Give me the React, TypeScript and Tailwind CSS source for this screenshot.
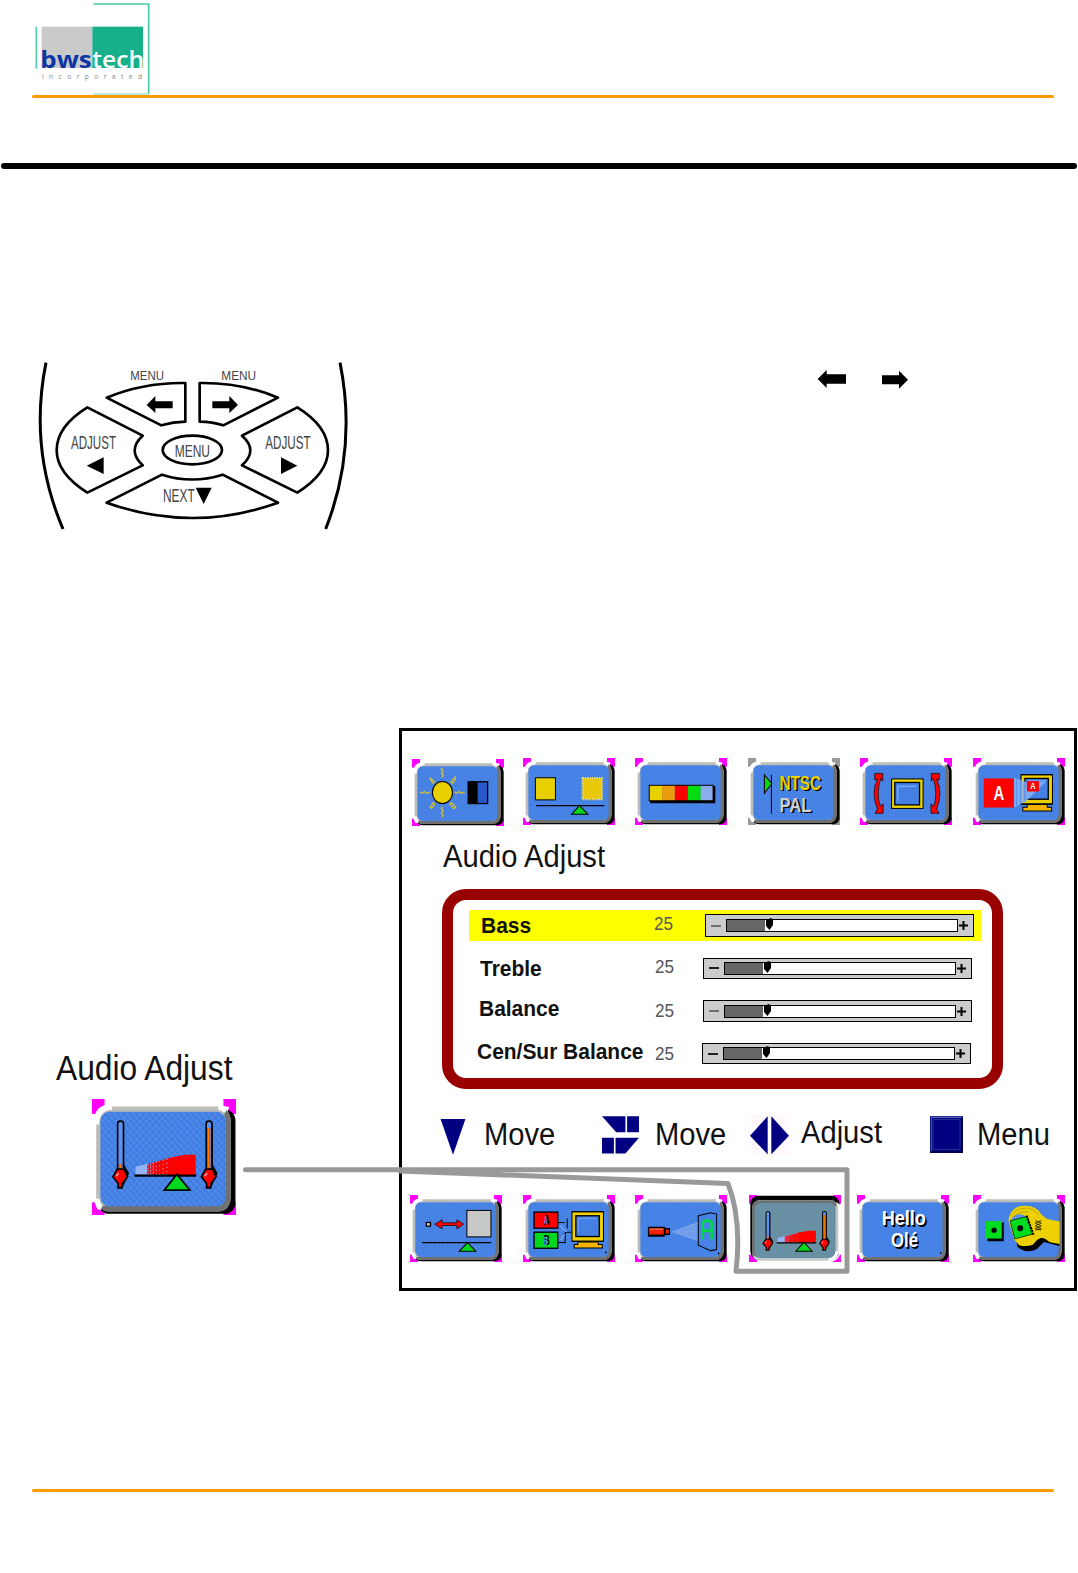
import type { ReactNode } from "react";

function Tile({ children, pressed = false, corner = "#ff00ff", className }: { children: ReactNode; pressed?: boolean; corner?: string; className: string }) {
  return (
    <svg viewBox="0 0 275 200" preserveAspectRatio="none" className={className}>
      <defs>
        <pattern id="weaveBlue" width="12" height="12" patternUnits="userSpaceOnUse">
          <rect width="12" height="12" fill="#4683e6" />
          <path d="M1 0l2 6M7 6l2 6" stroke="#3c74d4" strokeWidth="2" />
          <path d="M7 0l2 5M1 7l2 5" stroke="#5590f0" strokeWidth="2" />
        </pattern>
        <pattern id="weaveSteel" width="12" height="12" patternUnits="userSpaceOnUse">
          <rect width="12" height="12" fill="#6890a4" />
          <path d="M1 0l2 6M7 6l2 6" stroke="#5a7f98" strokeWidth="2" />
          <path d="M7 0l2 5M1 7l2 5" stroke="#7aa2ae" strokeWidth="2" />
        </pattern>
      </defs>
      <path d="M0 0H24V26H0ZM251 0H275V26H251ZM0 178H24V200H0ZM251 178H275V200H251Z" fill={corner} />
      {pressed ? (
        <>
          <rect x="12" y="10" width="260" height="188" rx="26" fill="#fff" />
          <rect x="4" y="2" width="266" height="190" rx="24" fill="#000" />
          <path d="M262 20L275 34V170L246 198H30L12 186L40 194H240Z" fill="#fff" />
          <rect x="9" y="15" width="258" height="181" rx="24" fill="#c4c8ca" />
          <path d="M9 178V40Q9 16 34 16H244Q262 18 262 34H24V186Z" fill="#6c7070" />
          <rect x="17" y="24" width="242" height="164" rx="17" fill="url(#weaveSteel)" />
          <path d="M262 168Q262 190 238 193" fill="none" stroke="#fff" strokeWidth="8" />
        </>
      ) : (
        <>
          <rect x="12" y="18" width="262" height="180" rx="20" fill="#000" />
          <path d="M4 40Q4 10 34 10H240L262 14L256 30H30L20 190H10L4 176Z" fill="#fff" />
          <rect x="8" y="13" width="257" height="181" rx="25" fill="#bdbdb8" />
          <path d="M245 14Q265 18 265 40V168Q265 194 240 194H32Q18 194 13 184H244Q252 182 253 170V24Z" fill="#707070" />
          <rect x="16" y="22" width="240" height="163" rx="17" fill="url(#weaveBlue)" />
          <path d="M9 44Q9 15 38 14M242 13L256 20M9 172Q11 184 18 188" fill="none" stroke="#fff" strokeWidth="9" />
        </>
      )}
      {children}
    </svg>
  );
}

function Thermometer({ x, level }: { x: number; level: number }) {
  return (
    <g>
      <path d={`M${x + 5} 42V114l9 14l-12 24h-8`} fill="none" stroke="#000" strokeWidth="5" />
      <rect x={x - 5} y="38" width="11" height="88" rx="5" fill="#5c94f4" stroke="#000" strokeWidth="3" />
      <rect x={x - 3} y={level} width="6" height={128 - level} fill="#f03c00" />
      <rect x={x - 1} y={level} width="2" height={122 - level} fill="#ff9000" />
      <path d={`M${x - 6} 121H${x + 7}L${x + 14} 134L${x + 4} 146V153H${x - 4}V146L${x - 14} 134Z`} fill="#f00" stroke="#000" strokeWidth="3" />
      <path d={`M${x - 8} 133l5 -5`} stroke="#ff9aa0" strokeWidth="3" />
    </g>
  );
}

function AudioGlyph({ left, right }: { left: number; right: number }) {
  return (
    <g>
      <Thermometer x={left} level={113} />
      <Thermometer x={right} level={50} />
      <path d="M83 117L108 111V130H83Z" fill="#94b4f2" />
      <path d="M105 113L150 101V130H105Z" fill="#f00" />
      <path d="M107 113V130M112 112V130M117 110V130" stroke="#94b4f2" strokeWidth="2" strokeDasharray="3 2" />
      <path d="M123 108V130M129 107V130M136 105V130M143 103V130" stroke="#a5a5e8" strokeWidth="2" strokeDasharray="2 5" />
      <path d="M145 102L176 96H198V131H145Z" fill="#f00" />
      <path d="M81 132H199" stroke="#000" strokeWidth="4" />
      <path d="M162 130L187 157H138Z" fill="#00d820" stroke="#000" strokeWidth="3" />
    </g>
  );
}

function Monitor() {
  return (
    <>
      <path d="M149 52H239V138H149Z" fill="#000" />
      <path d="M153 56H235V134H153Z" fill="#ffe000" />
      <path d="M157 60H231V130H157Z" fill="#d8a800" />
      <rect x="160" y="64" width="69" height="60" fill="#4480e4" stroke="#000" strokeWidth="3" />
      <path d="M167 120V71H224" fill="none" stroke="#86b4ff" strokeWidth="2" />
      <path d="M170 138H222V146H236V157H155V146H170Z" fill="#f4b400" stroke="#000" strokeWidth="3" />
    </>
  );
}

const tile = "h-[67px] w-[92px] shrink-0";
const tileText = { fontFamily: "Liberation Sans", fontWeight: 700, lengthAdjust: "spacingAndGlyphs" as const };

function Brightness() {
  return (
    <Tile className={tile}>
      <g stroke="#cdbb3e" strokeWidth="4" fill="none">
        <path d="M91 26l-4 5 6 5-5 6 5 6-4 8M91 142l-4 6 6 6-5 6 5 8-4 6M24 99l7 3 6-5 7 5 11-3M127 99l7 3 6-5 7 5 11-3" />
        <path d="M52 56l10 16 5-5-10-8zM129 54l-13 14 5 5 8-10zM54 144l9-14 5 5-9 12zM131 144l-14-14-4 5 12 13z" strokeWidth="4" />
      </g>
      <ellipse cx="91" cy="100" rx="30" ry="33" fill="#e8d000" stroke="#000" strokeWidth="3" />
      <rect x="168" y="68" width="58" height="65" fill="#2858c8" stroke="#000" strokeWidth="4" />
      <rect x="168" y="68" width="28" height="65" fill="#000" />
    </Tile>
  );
}

function Sharpness() {
  return (
    <Tile className={tile}>
      <rect x="37" y="59" width="60" height="66" fill="#e8d000" stroke="#000" strokeWidth="3" />
      <rect x="178" y="60" width="58" height="63" fill="#e8c808" />
      <rect x="178" y="60" width="58" height="63" fill="none" stroke="#eddc70" strokeWidth="6" strokeDasharray="4 3" />
      <path d="M39 142H243" stroke="#000" strokeWidth="4" />
      <path d="M169 142L194 168H145Z" fill="#00d820" stroke="#000" strokeWidth="3" />
    </Tile>
  );
}

function ColorBar() {
  return (
    <Tile className={tile}>
      <rect x="45" y="84" width="195" height="51" fill="#000" />
      <rect x="41" y="80" width="194" height="49" fill="#000" />
      <path d="M44 83H82V126H44Z" fill="#e8d000" />
      <path d="M81 83H120V126H81Z" fill="#e89c10" />
      <path d="M119 83H159V126H119Z" fill="#f00" />
      <path d="M158 83H197V126H158Z" fill="#00dc10" />
      <path d="M196 83H232V126H196Z" fill="#8cacf0" />
    </Tile>
  );
}

function VideoStandard() {
  return (
    <Tile className={tile} corner="#999999">
      <path d="M70 50V166" stroke="#000" strokeWidth="3" />
      <path d="M49 50L71 77L49 105Z" fill="#00dc10" stroke="#000" strokeWidth="3" />
      <text {...tileText} x="99" y="100" fontSize="61" textLength="124" fill="#000">NTSC</text>
      <text {...tileText} x="94" y="96" fontSize="61" textLength="124" fill="#e8d000">NTSC</text>
      <text {...tileText} x="99" y="165" fontSize="61" textLength="95" fill="#000">PAL</text>
      <text {...tileText} x="94" y="161" fontSize="61" textLength="95" fill="#d0d0d0">PAL</text>
    </Tile>
  );
}

function Rotate() {
  const arrow = "M44 46H68V69L62 61Q48 104 60 144L69 137V165H45L52 152Q32 104 52 63L44 66Z";
  return (
    <Tile className={tile}>
      <path d={arrow} fill="#f00" stroke="#000" strokeWidth="2" />
      <path d={arrow} fill="#f00" stroke="#000" strokeWidth="2" transform="matrix(-1 0 0 1 281 0)" />
      <rect x="93" y="61" width="97" height="91" fill="#000" />
      <rect x="96" y="64" width="91" height="85" fill="#ecd400" />
      <rect x="104" y="73" width="74" height="67" fill="#4480e4" stroke="#000" strokeWidth="4" />
      <path d="M113 130V84H168" fill="none" stroke="#8cb4ff" strokeWidth="3" />
    </Tile>
  );
}

function Source() {
  return (
    <Tile className={tile}>
      <rect x="142" y="48" width="97" height="92" fill="#000" />
      <rect x="145" y="52" width="91" height="83" fill="#ecd000" />
      <rect x="155" y="61" width="70" height="62" fill="#4480e4" stroke="#000" strokeWidth="4" />
      <path d="M165 67H220" stroke="#86b4ff" strokeWidth="2" />
      <path d="M162 139H222V147H235V158H149V147H162Z" fill="#f4b400" stroke="#000" strokeWidth="3" />
      <path d="M123 58L160 72L218 70L160 128L123 148Z" fill="#8cb4f8" opacity=".8" />
      <path d="M130 62V144M142 66V138M153 72V132" stroke="#5c92ee" strokeWidth="3" />
      <rect x="32" y="61" width="90" height="87" fill="#f00" />
      <text {...tileText} x="61" y="126" fontSize="61" textLength="32" fill="#fff">A</text>
      <rect x="161" y="69" width="36" height="31" fill="#f00" />
      <text {...tileText} x="171" y="94" fontSize="28" textLength="16" fill="#fff">A</text>
    </Tile>
  );
}

function SizeAdjust() {
  return (
    <Tile className={tile}>
      <rect x="49" y="82" width="12" height="11" fill="#ddd" stroke="#000" strokeWidth="4" />
      <path d="M74 87L96 74V83H140V74L161 87L140 101V91H96V101Z" fill="#f00" stroke="#000" strokeWidth="2" />
      <rect x="170" y="46" width="72" height="79" fill="#c8c8c8" stroke="#000" strokeWidth="3" />
      <path d="M36 142H243" stroke="#000" strokeWidth="4" />
      <path d="M172 142L197 168H147Z" fill="#00d820" stroke="#000" strokeWidth="3" />
    </Tile>
  );
}

function InputSelect() {
  return (
    <Tile className={tile}>
      <path d="M102 82H124M132 70V100M126 144V111H145M102 142H128" fill="none" stroke="#000" strokeWidth="3" />
      <path d="M112 92l18 18M113 134l12-16" stroke="#9abfff" strokeWidth="4" strokeDasharray="4 3" />
      <rect x="33" y="51" width="71" height="48" fill="#f00" stroke="#000" strokeWidth="4" />
      <rect x="33" y="111" width="71" height="48" fill="#00d820" stroke="#000" strokeWidth="4" />
      <text {...tileText} x="62" y="90" fontSize="42" textLength="18" fill="#000">A</text>
      <text {...tileText} x="63" y="88" fontSize="32" textLength="10" fill="#5d98f0">A</text>
      <text {...tileText} x="62" y="150" fontSize="42" textLength="18" fill="#000">B</text>
      <text {...tileText} x="63" y="148" fontSize="32" textLength="10" fill="#5d98f0">B</text>
      <rect x="145" y="48" width="97" height="92" fill="#000" />
      <rect x="148" y="52" width="91" height="84" fill="#ecd000" />
      <rect x="158" y="62" width="70" height="62" fill="#4480e4" stroke="#000" strokeWidth="4" />
      <path d="M165 112V70H220" fill="none" stroke="#86b4ff" strokeWidth="2" />
      <path d="M164 140H225V148H237V158H153V148H164Z" fill="#f4b400" stroke="#000" strokeWidth="3" />
      <path d="M248 169v5" stroke="#000" strokeWidth="4" />
    </Tile>
  );
}

function Projection() {
  return (
    <Tile className={tile}>
      <path d="M110 110L189 79V139Z" fill="#7aa2ee" opacity=".8" />
      <path d="M114 109L188 84M116 112L188 134M120 110H188" stroke="#c8c890" strokeWidth="2" strokeDasharray="3 9" />
      <path d="M41 97H87L91 101H102V117H90L86 122H41Z" fill="#000" stroke="#000" strokeWidth="5" />
      <path d="M42 99H86V118H42ZM92 103H101V115H92Z" fill="#f22000" />
      <path d="M44 102H84" stroke="#ff8a70" strokeWidth="3" />
      <path d="M189 62L226 53L244 57V163L226 166L189 150Z" fill="none" stroke="#000" strokeWidth="3" />
      <path d="M202 132V88Q202 77 214 77H219Q230 77 230 88V132M202 107H230" fill="none" stroke="#00dc40" strokeWidth="9" strokeDasharray="9 1" />
      <path d="M250 172v5" stroke="#000" strokeWidth="4" />
    </Tile>
  );
}

function Language() {
  return (
    <Tile className={tile}>
      <text {...tileText} x="79" y="95" fontSize="60" textLength="132" fill="#000">Hello</text>
      <text {...tileText} x="74" y="91" fontSize="60" textLength="132" fill="#fff">Hello</text>
      <text {...tileText} x="107" y="160" fontSize="60" textLength="80" fill="#000">Olé</text>
      <text {...tileText} x="102" y="156" fontSize="60" textLength="80" fill="#fff">Olé</text>
      <path d="M250 170v5" stroke="#000" strokeWidth="4" />
    </Tile>
  );
}

function Setup() {
  return (
    <Tile className={tile}>
      <path d="M43 82H92V138H43Z" fill="#000" />
      <path d="M38 78H86V130H38Z" fill="#00dc20" />
      <circle cx="63" cy="105" r="8" fill="#000" />
      <path d="M130 142L134 156Q160 176 190 162L212 140L258 152V142L188 124Z" fill="#000" />
      <path d="M106 76Q112 34 150 32Q190 30 204 58L222 72L259 79V146L230 141L212 128Q196 124 180 148Q160 156 138 150L124 134Z" fill="#ecd000" />
      <path d="M113 76Q122 54 146 58L160 64L113 77Z" fill="#5a92ea" />
      <path d="M113 62Q128 38 165 39Q188 45 194 60M120 67Q138 47 166 50" fill="none" stroke="#a99400" strokeWidth="2" />
      <path d="M111 77L162 64L178 117L125 131Z" fill="#00dc20" stroke="#000" strokeWidth="2" />
      <path d="M160 62L181 120" stroke="#000" strokeWidth="7" strokeDasharray="6 3" />
      <circle cx="141" cy="99" r="9" fill="#000" />
      <path d="M186 76l18 8-18 8 18 8-18 5M204 76l-18 8 18 8-18 8 18 5" fill="none" stroke="#000" strokeWidth="2" />
    </Tile>
  );
}

function Remote() {
  return (
    <svg viewBox="0 0 990 540" className="ml-[30px] h-[180px] w-[330px] shrink-0">
      <g fill="none" stroke="#000" strokeWidth="8" strokeLinejoin="round">
        <path d="M48 23Q-4 280 99 522M930 23Q982 280 887 522" strokeWidth="9" />
        <path d="M230 128Q340 82 466 84V200Q430 201 394 211ZM744 128Q634 82 509 84V200Q548 201 580 211Z" />
        <path d="M172 157L338 242Q290 286 338 331L172 413Q80 355 80 286Q80 214 172 157ZM802 157L636 242Q686 286 636 331L802 413Q894 355 894 286Q894 214 802 157Z" />
        <path d="M230 443L396 359Q486 388 578 359L744 443Q486 535 230 443Z" />
        <ellipse cx="487" cy="285" rx="89" ry="43" />
      </g>
      <path d="M350 150L376 123V139H428V160H376V174ZM624 150L598 123V139H547V160H598V174ZM170 332L221 307V357ZM802 332L753 307V357ZM497 398H545L521 447Z" />
      <g fontFamily="Liberation Sans" fill="#444">
        <text x="301" y="75" fontSize="37" textLength="101" lengthAdjust="spacingAndGlyphs">MENU</text>
        <text x="574" y="75" fontSize="37" textLength="104" lengthAdjust="spacingAndGlyphs">MENU</text>
        <text x="123" y="282" fontSize="53" textLength="135" lengthAdjust="spacingAndGlyphs">ADJUST</text>
        <text x="706" y="282" fontSize="53" textLength="136" lengthAdjust="spacingAndGlyphs">ADJUST</text>
        <text x="434" y="307" fontSize="50" textLength="106" lengthAdjust="spacingAndGlyphs">MENU</text>
        <text x="399" y="442" fontSize="55" textLength="95" lengthAdjust="spacingAndGlyphs">NEXT</text>
      </g>
    </svg>
  );
}

function Slider({ faint }: { faint: boolean }) {
  return (
    <div className="flex h-full w-full items-center border-[1.5px] border-black bg-[#cccccc]">
      <div className={faint ? "ml-[5px] h-[2px] w-[10px] bg-[#707070]" : "ml-[5px] h-[2px] w-[10px] bg-[#222]"} />
      <div className="ml-[5px] flex h-[13px] w-[232px] border-[1.5px] border-black bg-white">
        <div className="h-full w-[38px] bg-[#666666]" />
        <svg viewBox="0 0 9 12" className="-mt-[2px] h-[12px] w-[9px] shrink-0"><path d="M1 1L3 2L5 0L8 1V7L4.5 12L1 8Z" /></svg>
      </div>
      <svg viewBox="0 0 9 9" className="ml-[1px] h-[9px] w-[9px] shrink-0"><path d="M4.5 0V9M0 4.5H9" stroke="#000" strokeWidth="2" /></svg>
    </div>
  );
}

const rows = [
  { name: "Bass", row: "mt-[10px] h-[31px] bg-[#ffff00]", label: "left-[12px] top-[3px]", val: "left-[185px] top-[3px]", pad: "left-[236px] top-[4px] h-[23px]", faint: true },
  { name: "Treble", row: "mt-[12px] h-[31px]", label: "left-[11px] top-[3px]", val: "left-[186px] top-[3px]", pad: "left-[234px] top-[4.5px] h-[21px]", faint: false },
  { name: "Balance", row: "mt-[12px] h-[31px]", label: "left-[10px] top-0", val: "left-[186px] top-[4px]", pad: "left-[234px] top-[4px] h-[22px]", faint: true },
  { name: "Cen/Sur Balance", row: "mt-[12px] h-[31px]", label: "left-[8px] top-0", val: "left-[186px] top-[4px]", pad: "left-[233px] top-[4px] h-[21px]", faint: false },
];

function Caption({ children, className }: { children: ReactNode; className: string }) {
  return <span className={`block origin-left scale-x-[.94] text-[31px] leading-[36px] whitespace-nowrap ${className}`}>{children}</span>;
}

export default function App() {
  return (
    <div className="relative flex h-[1573px] w-[1078px] flex-col overflow-hidden bg-white font-['Liberation_Sans',sans-serif] text-[#111]">
      <header className="flex h-[95px] shrink-0">
        <svg viewBox="0 0 360 285" className="ml-[33px] h-[95px] w-[120px]">
          <g transform="translate(-99 0)">
            <path d="M109 80V206" stroke="#58ccb0" strokeWidth="5" />
            <path d="M280 12H446V283" fill="none" stroke="#48c8a8" strokeWidth="5" />
            <path d="M280 282H446" stroke="#a0e4d4" strokeWidth="5" />
            <rect x="125" y="80" width="152" height="124" fill="#cacaca" />
            <rect x="277" y="80" width="152" height="124" fill="#18b08a" />
            <text x="121" y="204" fontFamily="Open Sans" fontSize="72" textLength="154" fontWeight="700" fill="#0c35a5" lengthAdjust="spacingAndGlyphs">bws</text>
            <text x="277" y="204" fontFamily="Open Sans" fontSize="72" textLength="155" fontWeight="600" fill="#fff" lengthAdjust="spacingAndGlyphs">tech</text>
            <text x="126" y="236" fontFamily="Open Sans" fontSize="20" textLength="300" fill="#888">incorporated</text>
          </g>
        </svg>
      </header>
      <div className="ml-[32px] h-[3px] w-[1022px] shrink-0 rounded-full bg-[#ff9900]" />
      <div className="mt-[65px] ml-px h-[6px] w-[1076px] shrink-0 rounded-full bg-black" />

      <section className="mt-[186px] flex h-[180px] shrink-0">
        <Remote />
        <svg viewBox="0 0 390 120" className="mt-[5px] ml-[440px] h-[40px] w-[130px]">
          <path d="M53 57L80 30V43H138V71H80V84ZM324 59L297 32V46H246V73H297V86Z" />
        </svg>
      </section>

      <main className="mt-[193px] flex h-[563px] shrink-0">
        <aside className="w-[399px] shrink-0">
          <span className="mt-[321px] ml-[56px] block origin-left scale-x-[.92] text-[34.5px] leading-[38px] whitespace-nowrap">Audio Adjust</span>
          <div className="mt-[12px] ml-[92px]">
            <Tile className="block h-[116px] w-[144px]">
              <AudioGlyph left={54} right={223} />
            </Tile>
          </div>
        </aside>

        <div className="flex w-[678px] flex-col border-[3px] border-black">
          <div className="mt-[27px] ml-[9.5px] flex h-[68px] shrink-0">
            <div className="mt-px"><Brightness /></div>
            <div className="ml-[19.5px]"><Sharpness /></div>
            <div className="ml-[20px]"><ColorBar /></div>
            <div className="ml-[20.5px]"><VideoStandard /></div>
            <div className="ml-[20.5px]"><Rotate /></div>
            <div className="ml-[20.5px]"><Source /></div>
          </div>

          <Caption className="mt-[13px] ml-[41px]">Audio Adjust</Caption>

          <div className="mt-[14px] ml-[40px] h-[200px] w-[561px] shrink-0 rounded-[24px] border-[11.5px] border-[#990000]">
            {rows.map((r) => (
              <div key={r.name} className={`relative ml-[16px] w-[512px] ${r.row}`}>
                <span className={`absolute block origin-left scale-x-[.952] text-[22px] leading-[25px] font-bold whitespace-nowrap ${r.label}`}>{r.name}</span>
                <span className={`absolute block origin-left scale-x-[.9] text-[19px] leading-[22px] text-[#555] ${r.val}`}>25</span>
                <div className={`absolute w-[269px] ${r.pad}`}><Slider faint={r.faint} /></div>
              </div>
            ))}
          </div>

          <div className="mt-[26px] flex h-[45px] shrink-0 items-start">
            <svg viewBox="0 0 76 110" className="mt-[4px] ml-[38px] h-[36px] w-[26px] shrink-0"><path d="M0 0H76L38 109Z" fill="#000080" /></svg>
            <Caption className="mt-[2px] ml-[18px] w-[96px]">Move</Caption>
            <svg viewBox="0 0 112 114" className="mt-px ml-[22px] h-[38px] w-[37px] shrink-0"><path d="M0 0H71V49H43ZM76 0H112V49H76ZM0 65H36V113H0ZM41 65H112L71 113H41Z" fill="#000080" /></svg>
            <Caption className="mt-[2px] ml-[16px] w-[70px]">Move</Caption>
            <svg viewBox="0 0 120 126" className="-mt-px ml-[25px] h-[42px] w-[40px] shrink-0">
              <defs><pattern id="pinkDots" width="12" height="12" patternUnits="userSpaceOnUse"><path d="M1 2h3M7 8h3" stroke="#ffc8ff" strokeWidth="2" /></pattern></defs>
              <rect width="120" height="126" fill="url(#pinkDots)" />
              <path d="M53 7V121L0 65ZM64 7V121L117 65Z" fill="#000080" />
              <path d="M58 5V123" stroke="#fff" strokeWidth="8" />
            </svg>
            <Caption className="ml-[11px] w-[90px]">Adjust</Caption>
            <svg viewBox="0 0 99 110" className="mt-px ml-[39px] h-[37px] w-[33px] shrink-0">
              <rect width="99" height="110" fill="#000080" />
              <path d="M4 108V4H98" fill="none" stroke="#5068b0" strokeWidth="3" />
              <path d="M9 10H90V100H9Z" fill="none" stroke="#203090" strokeWidth="3" />
              <path d="M1 108H98V2" fill="none" stroke="#000048" strokeWidth="5" />
            </svg>
            <Caption className="mt-[2px] ml-[14px]">Menu</Caption>
          </div>

          <div className="mt-[35px] ml-[8px] flex h-[68px] shrink-0">
            <div><SizeAdjust /></div>
            <div className="ml-[21px]"><InputSelect /></div>
            <div className="ml-[20px]"><Projection /></div>
            <div className="ml-[21.5px]">
              <Tile pressed className={tile}>
                <g transform="translate(2 11)"><AudioGlyph left={54} right={223} /></g>
              </Tile>
            </div>
            <div className="ml-[16px]"><Language /></div>
            <div className="ml-[24px]"><Setup /></div>
          </div>
        </div>
      </main>

      <svg viewBox="0 0 620 120" className="pointer-events-none absolute top-[1160px] left-[236px] h-[120px] w-[620px]">
        <path d="M9.5 9.7H611V111.3H500Q506 60 492 23.5L164 11" fill="none" stroke="#999" strokeWidth="5" strokeLinecap="round" strokeLinejoin="round" />
      </svg>
      <div className="mt-[198px] ml-[32px] h-[3px] w-[1022px] shrink-0 rounded-full bg-[#ff9900]" />
    </div>
  );
}
